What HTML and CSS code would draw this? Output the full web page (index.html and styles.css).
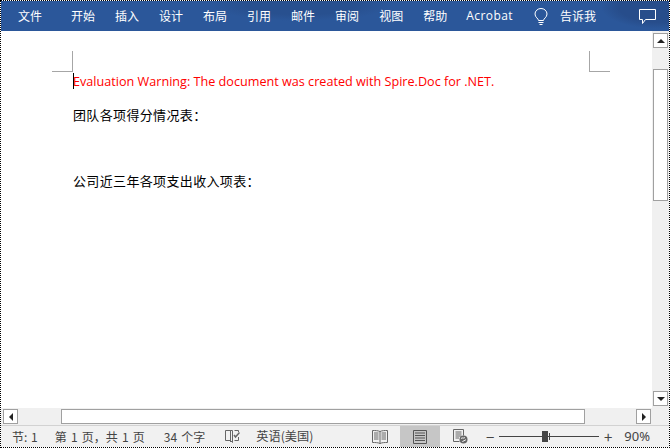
FILE: index.html
```html
<!DOCTYPE html>
<html lang="zh">
<head>
<meta charset="utf-8">
<title>Word</title>
<link rel="stylesheet" href="styles.css">
</head>
<body>
<div class="window">
  <header class="ribbon">
    <span class="tab tab-file">文件</span>
    <nav class="tabs">
      <span class="tab">开始</span>
      <span class="tab">插入</span>
      <span class="tab">设计</span>
      <span class="tab">布局</span>
      <span class="tab">引用</span>
      <span class="tab">邮件</span>
      <span class="tab">审阅</span>
      <span class="tab">视图</span>
      <span class="tab">帮助</span>
      <span class="tab tab-latin">Acrobat</span>
    </nav>
    <svg class="bulb" width="14" height="18" viewBox="0 0 14 18" fill="none" stroke="#fff" stroke-width="1">
      <path d="M4.500 12.500C4.500 10.500 1 9.500 1 6A6 5.500 0 0 1 13 6C13 9.500 9.500 10.500 9.500 12.500Z"/>
      <path d="M4.500 14.500H9.500M5.500 16.500H8.500"/>
    </svg>
    <span class="tab tell">告诉我</span>
    <svg class="comment" width="17" height="16" viewBox="0 0 17 16" fill="none" stroke="#fff" stroke-width="1">
      <path d="M.5 .5H16.500V10.500H6.500L3.500 14.500V10.500H.5Z"/>
    </svg>
  </header>
  <div class="workspace">
    <main class="page">
      <i class="crop crop-left"></i>
      <i class="crop crop-right"></i>
      <p class="warning"><i class="caret"></i>Evaluation Warning: The document was created with Spire.Doc for .NET.</p>
      <p class="line">团队各项得分情况表：</p>
      <p class="line line-second">公司近三年各项支出收入项表：</p>
    </main>
    <aside class="vscroll">
      <button class="sbtn"><i class="arrow up"></i></button>
      <div class="vtrack"><div class="vthumb"></div></div>
      <button class="sbtn"><i class="arrow down"></i></button>
    </aside>
  </div>
  <div class="hscroll">
    <button class="sbtn"><i class="arrow left"></i></button>
    <div class="htrack"><div class="hthumb"></div></div>
    <button class="sbtn"><i class="arrow right"></i></button>
  </div>
  <footer class="status">
    <span class="st st-sec">节: 1</span>
    <span class="st st-page">第 1 页，共 1 页</span>
    <span class="st st-words">34 个字</span>
    <svg class="proof" width="15" height="15" viewBox="0 0 15 15" fill="none" stroke="#666" stroke-width="1">
      <path d="M7.500 1.500H.5V11.500H5.500M7.500 1.500V13.500M5.500 1.500V13M7.500 13.500L5.500 11.500M9.500 1.500H13.500V3M13.500 8V11.500H9.500"/>
      <path d="M9 6L10.500 8L14.500 3.500" stroke-width="1.500"/>
    </svg>
    <span class="st st-lang">英语(美国)</span>
    <div class="views">
      <span class="view">
        <svg width="16" height="16" viewBox="0 0 16 16" fill="none" stroke="#666" stroke-width="1">
          <path d="M8 2.500C6 1.500 3 1.500 .5 1.500V13.500C3 13.500 6 13.500 8 14.500C10 13.500 13 13.500 15.500 13.500V1.500C13 1.500 10 1.500 8 2.500V14.500M2 4H6.500M2 6H6.500M2 8H6.500M2 10H6.500M9.500 4H14M9.500 6H14M9.500 8H14M9.500 10H14"/>
        </svg>
      </span>
      <span class="view view-on">
        <svg width="16" height="14" viewBox="0 0 16 14" fill="none" stroke="#555" stroke-width="1">
          <path d="M1.500 .5H14.500V13.500H1.500ZM3 3H13M3 5.500H13M3 8H13M3 10.500H13"/>
        </svg>
      </span>
      <span class="view">
        <svg width="15" height="15" viewBox="0 0 15 15" fill="none" stroke="#666" stroke-width="1">
          <path d="M6.500 12.500H.5V.5H10.500V6.500M2.500 3H8.500M2.500 5H8.500M2.500 7H8.500M2.500 9H6"/>
          <circle cx="10.500" cy="10.500" r="4" fill="#666" stroke="none"/>
          <path d="M8 9.500C9.500 8 10.500 10 12 8.500M9.500 13C9.500 11.500 12 12 13 10.500" stroke="#f1f1f1"/>
        </svg>
      </span>
    </div>
    <div class="zoom">
      <span class="zbtn">−</span>
      <div class="slider"><i class="tick"></i><i class="knob"></i></div>
      <span class="zbtn">+</span>
    </div>
    <span class="st st-pct">90%</span>
  </footer>
</div>
</body>
</html>
```

FILE: styles.css
```css
* { box-sizing: border-box; }
html, body { margin: 0; padding: 0; }
body { width: 670px; height: 448px; overflow: hidden; background: #fff; }
.window {
  width: 670px; height: 448px; border: 1px dotted #000;
  display: flex; flex-direction: column;
  font-family: "Noto Sans CJK SC", "Noto Sans", sans-serif;
}
.ribbon {
  height: 30px; flex: none; color: #fff;
  background:
    radial-gradient(ellipse 90px 16px at 300px 4px, #28508f 60%, transparent 100%),
    radial-gradient(ellipse 60px 22px at 660px 6px, #274d8b 70%, transparent 100%),
    #2b579a;
  display: flex; align-items: center; padding-left: 17px;
  font-size: 12px;
}
.tab { white-space: nowrap; line-height: 30px; }
.tabs { display: flex; gap: 20px; margin-left: 29px; }
.tab-latin { font-family: "Open Sans", sans-serif; letter-spacing: .45px; margin-left: -1px; font-size: 12px; }
.bulb { margin-left: 21px; flex: none; margin-top: 1px; }
.tell { margin-left: 12px; }
.comment { margin-left: 43px; flex: none; margin-top: 1px; }
.workspace { flex: 1; min-height: 0; display: flex; padding-bottom: 0; }
.page {
  flex: 1; position: relative; background: #fff;
  padding: 40px 0 0 72px; color: #000;
}
.page p { margin: 0; white-space: nowrap; }
.crop { position: absolute; width: 21px; height: 21px; }
.crop-left { left: 51px; top: 20px; border-right: 1px solid #a6a6a6; border-bottom: 1px solid #a6a6a6; }
.crop-right { left: 588px; top: 20px; border-left: 1px solid #a6a6a6; border-bottom: 1px solid #a6a6a6; }
.warning { color: #f00; font-family: "Open Sans", sans-serif; font-size: 12.630px; line-height: 22px; position: relative; }
.caret { position: absolute; left: 0; top: 2px; width: 1px; height: 16px; background: #000; }
.line { font-size: 13px; letter-spacing: .35px; line-height: 22px; margin-top: 11px !important; }
.line-second { margin-top: 44px !important; }
.vscroll { width: 17px; flex: none; background: #f0f0f0; display: flex; flex-direction: column; padding: 2px 1px 2px 1px; }
.sbtn { width: 15px; height: 15px; padding: 0; flex: none; background: #fff; border: 1px solid #a0a0a0; border-radius: 0; display: flex; align-items: center; justify-content: center; }
.vtrack { flex: 1; width: 100%; padding-top: 21px; }
.vthumb { width: 15px; height: 132px; background: #fff; border: 1px solid #a0a0a0; }
.arrow { display: block; width: 0; height: 0; border: 4px solid transparent; }
.arrow.up { border-top: 0; border-bottom-color: #222; }
.arrow.down { border-bottom: 0; border-top-color: #222; }
.arrow.left { border-left: 0; border-right-color: #222; }
.arrow.right { border-right: 0; border-left-color: #222; }
.hscroll { height: 17px; flex: none; background: #f0f0f0; display: flex; align-items: center; padding: 0 18px 0 2px; }
.htrack { flex: 1; padding: 0 51px 0 43px; }
.hthumb { height: 15px; background: #fff; border: 1px solid #a0a0a0; }
.status {
  height: 22px; flex: none; background: #f1f1f1; border-top: 1px solid #d2d2d2;
  display: flex; align-items: center; color: #444; font-size: 12px; padding-left: 11px;
}
.st { white-space: nowrap; line-height: 21px; }
.st-sec { word-spacing: 1px; }
.st-page { margin-left: 17px; word-spacing: 1.500px; }
.st-words { margin-left: 19px; word-spacing: 1.500px; }
.proof { margin-left: 20px; flex: none; }
.st-lang { margin-left: 16px; font-size: 12.200px; }
.views { display: flex; margin-left: 47px; height: 21px; }
.view { width: 40px; display: flex; align-items: center; justify-content: center; }
.view-on { background: #c6c6c6; }
.zoom { display: flex; align-items: center; margin-left: 3px; }
.zbtn { width: 14px; text-align: center; font-size: 15px; line-height: 21px; color: #444; }
.slider { position: relative; width: 100px; height: 1px; background: #444; margin: 0 2px; }
.tick { position: absolute; left: 50px; top: -3px; width: 1px; height: 7px; background: #444; }
.knob { position: absolute; left: 43px; top: -5px; width: 6px; height: 11px; background: #444; }
.st-pct { margin-left: 9px; font-size: 13px; font-family: "Noto Sans", sans-serif; }
```
